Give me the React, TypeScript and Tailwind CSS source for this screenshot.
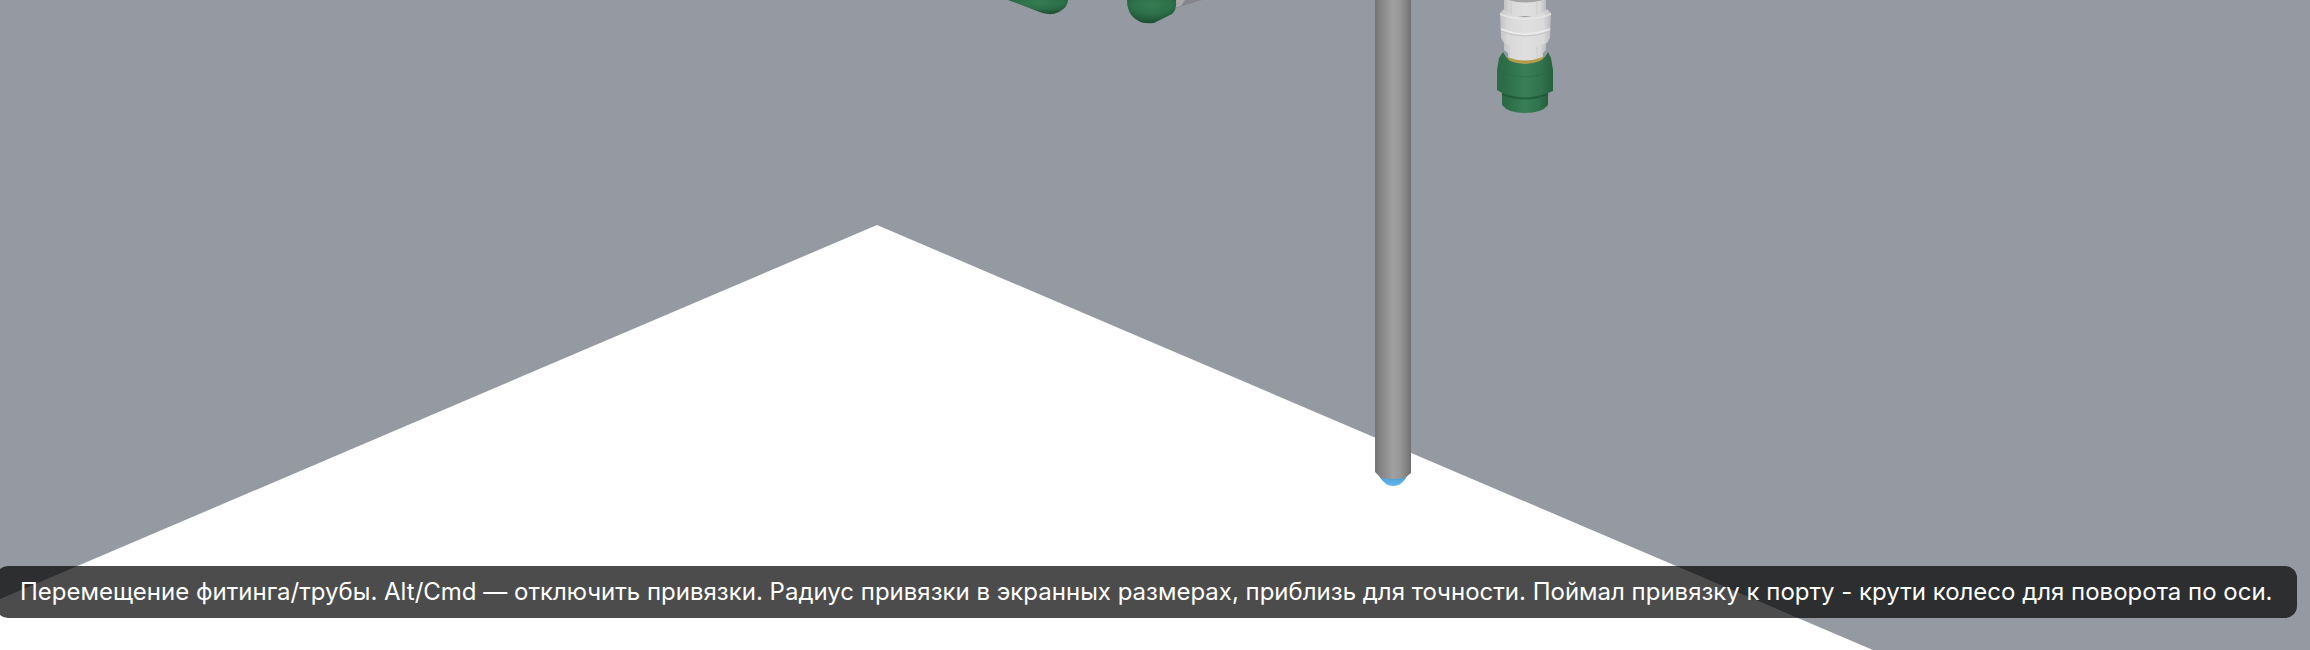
const HINT =
  "Перемещение фитинга/трубы. Alt/Cmd — отключить привязки. Радиус привязки в экранных размерах, приблизь для точности. Поймал привязку к порту - крути колесо для поворота по оси.";

function Gradients() {
  return (
    <defs>
      <linearGradient id="pipe">
        <stop offset="0" stopColor="#737377" />
        <stop offset="0.12" stopColor="#818181" />
        <stop offset="0.5" stopColor="#a0a0a0" />
        <stop offset="0.7" stopColor="#979797" />
        <stop offset="0.92" stopColor="#7b7b7b" />
        <stop offset="1" stopColor="#707075" />
      </linearGradient>
      <linearGradient id="plastic">
        <stop offset="0" stopColor="#c2c2c4" />
        <stop offset="0.15" stopColor="#d8d8d8" />
        <stop offset="0.5" stopColor="#dfdfdf" />
        <stop offset="0.85" stopColor="#dadada" />
        <stop offset="1" stopColor="#bcbcbf" />
      </linearGradient>
      <linearGradient id="green">
        <stop offset="0" stopColor="#2a6a45" />
        <stop offset="0.18" stopColor="#2d6f49" />
        <stop offset="0.5" stopColor="#387f57" />
        <stop offset="0.8" stopColor="#30734c" />
        <stop offset="1" stopColor="#255f3d" />
      </linearGradient>
      <radialGradient id="elbow" cx="0.5" cy="0.2" r="0.75">
        <stop offset="0" stopColor="#357c53" />
        <stop offset="0.55" stopColor="#2c6f48" />
        <stop offset="1" stopColor="#1f5133" />
      </radialGradient>
      <linearGradient id="port" x2="0" y2="1">
        <stop offset="0" stopColor="#4a9dd3" />
        <stop offset="1" stopColor="#62b8ee" />
      </linearGradient>
    </defs>
  );
}

function Elbows() {
  return (
    <g>
      <path d="M1008 0L1037 11Q1049 17 1059 12Q1068 7 1068 0Z" fill="url(#elbow)" />
      <path d="M1174 0H1202L1176 8Z" fill="#85868d" />
      <path d="M1174 0H1185L1181 6L1174 8Z" fill="#aaa7a6" />
      <path d="M1127 0Q1127 10 1132 16Q1140 25 1154 23L1172 14Q1177 10 1176 0Z" fill="url(#elbow)" />
    </g>
  );
}

function Coupling() {
  return (
    <g>
      <path d="M1504 0H1546V16H1504Z" fill="url(#plastic)" />
      <path d="M1508 0Q1525 5 1543 0Z" fill="#a5a5a7" />
      <path d="M1511 2V15M1537 2V15" stroke="#cacaca" />
      <path d="M1504 40H1546V50L1543 53V60Q1525 66 1508 60V53L1504 50Z" fill="url(#plastic)" />
      <path d="M1509 46V59M1537 46V60" stroke="#cccccc" />
      <path
        d="M1500 13L1504 9Q1506 15 1525 17Q1543 15 1547 9L1551 13L1550 38L1547 43Q1525 51 1504 43L1501 38Z"
        fill="url(#plastic)"
      />
      <path d="M1500 14Q1525 24 1551 14" fill="none" stroke="#e8e8e8" strokeWidth="2" opacity="0.7" />
      <path d="M1501 29Q1525 39 1550 29" fill="none" stroke="#ececec" strokeWidth="2" opacity="0.8" />
      <path d="M1501 31Q1525 41 1550 31" fill="none" stroke="#c4c4c4" />
      <path d="M1507 57Q1525 64 1543 57V66H1507Z" fill="#b59b4c" />
      <path d="M1502 90H1548V105Q1542 113 1525 113Q1508 113 1502 105Z" fill="url(#green)" />
      <path
        d="M1503 52Q1506 58 1510 61Q1525 67 1540 61Q1545 58 1548 52L1551 58L1553 70V91L1548 93Q1525 103 1502 93L1497 90V70L1499 58Z"
        fill="url(#green)"
      />
      <path d="M1498 71Q1525 83 1552 71" fill="none" stroke="#28653f" opacity="0.4" />
      <path d="M1502 94Q1525 103 1548 94" fill="none" stroke="#215838" strokeWidth="2" opacity="0.8" />
    </g>
  );
}

function Riser() {
  return (
    <g>
      <path d="M1379 476H1407Q1402 486 1393 486Q1385 486 1379 476Z" fill="url(#port)" />
      <path d="M1375 0H1411V473L1405 478Q1393 480 1381 478L1375 472Z" fill="url(#pipe)" />
    </g>
  );
}

export default function App() {
  return (
    <main className="relative min-h-screen overflow-hidden bg-[#9599a1]">
      <svg
        className="absolute inset-0 size-full"
        viewBox="0 0 2310 650"
        preserveAspectRatio="xMidYMid slice"
        aria-hidden="true"
      >
        <Gradients />
        <path d="M877 225L1873 650H0V599Z" fill="#ffffff" />
        <Elbows />
        <Riser />
        <Coupling />
      </svg>
      <div
        role="status"
        className="absolute bottom-8 -left-1 rounded-xl bg-black/70 px-6 py-2 font-['Inter',sans-serif] text-2xl leading-9 font-normal whitespace-nowrap text-white"
      >
        {HINT}
      </div>
    </main>
  );
}
